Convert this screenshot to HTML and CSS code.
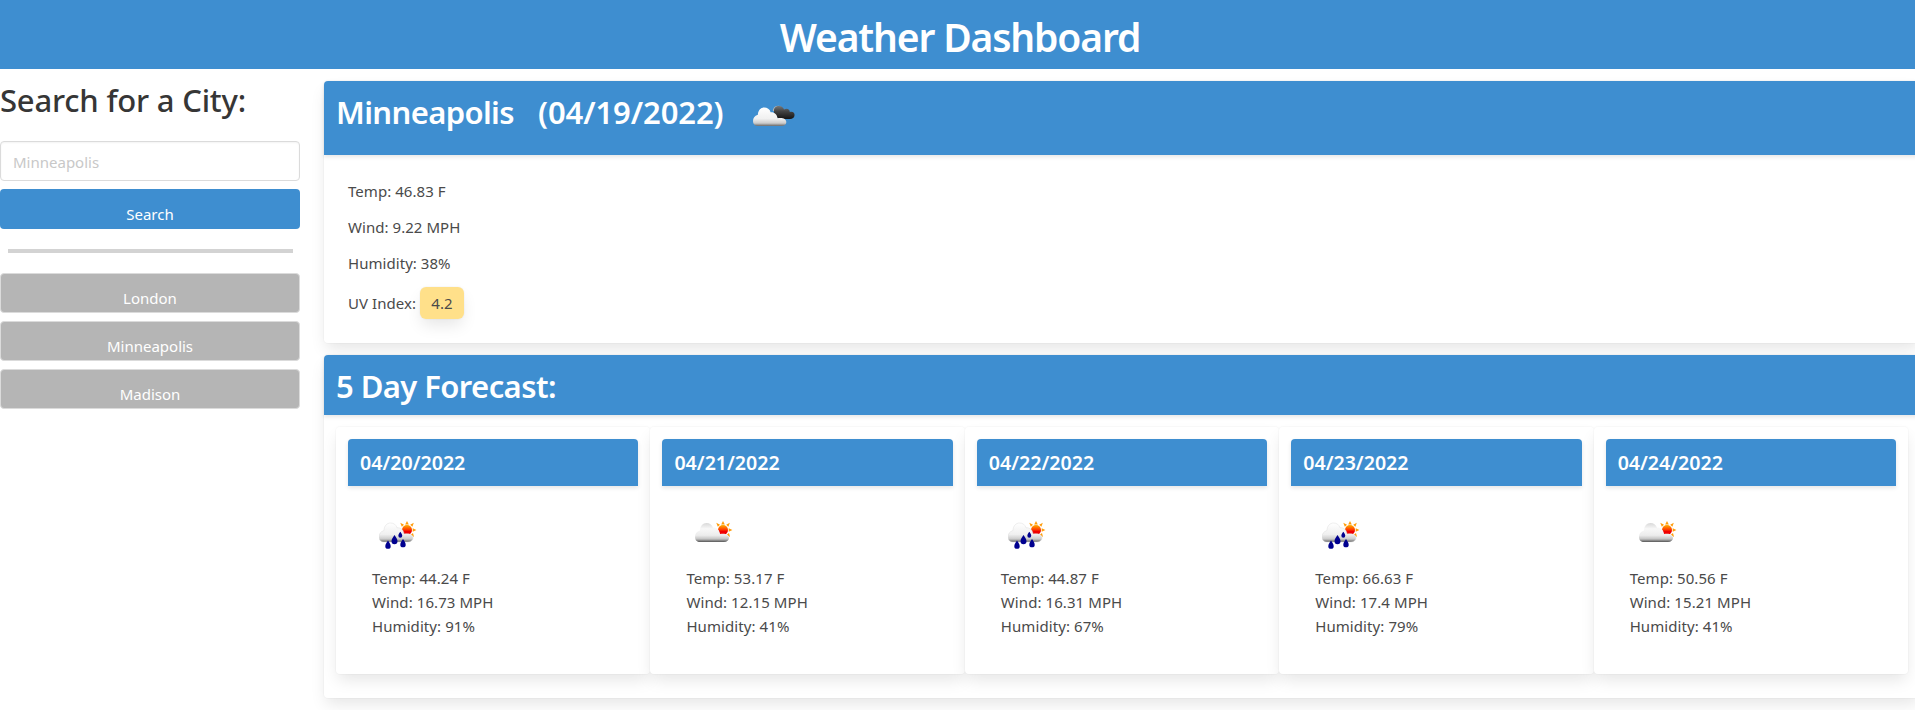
FILE: index.html
```
<!DOCTYPE html>
<html lang="en">
<head>
<meta charset="utf-8">
<title>Weather Dashboard</title>
<link rel="stylesheet" href="styles.css">
</head>
<body>
<svg class="defs" width="0" height="0" aria-hidden="true">
  <defs>
    <linearGradient id="cloud" x1="0" y1="0" x2="0" y2="1">
      <stop offset="0" stop-color="#d8d8d8"/><stop offset=".3" stop-color="#f8f8f8"/><stop offset=".65" stop-color="#ececec"/><stop offset=".84" stop-color="#c4c4c4"/><stop offset="1" stop-color="#555"/>
    </linearGradient>
    <linearGradient id="white" x1="0" y1="0" x2="0" y2="1">
      <stop offset="0" stop-color="#fff"/><stop offset=".6" stop-color="#f0f0f0"/><stop offset=".84" stop-color="#ccc"/><stop offset="1" stop-color="#666"/>
    </linearGradient>
    <linearGradient id="dark" x1="0" y1="0" x2="0" y2="1">
      <stop offset="0" stop-color="#777"/><stop offset=".4" stop-color="#444"/><stop offset="1" stop-color="#151515"/>
    </linearGradient>
    <linearGradient id="sun" x1="0" y1="0" x2="0" y2="1">
      <stop offset="0" stop-color="#ffb000"/><stop offset=".45" stop-color="#ff4000"/><stop offset=".65" stop-color="#f00000"/>
    </linearGradient>
    <path id="shape" d="M5 20C2 20 0 18 0 15C0 12 1.500 9.500 5 8.500C5 4 8 1 11.500 1C14.500 1 17 2.500 18 5.800C22 5.500 24.500 8 25 12C30 11 34 12.500 34 16C34 18 32 20 29 20Z"/>
    <g id="sunrays">
      <path fill="#ff9d0a" d="M28-1L29.800 2.500H26.200ZM21.300 .800L25 2.800 22.800 4.800ZM34.800 .800L33.400 4.800 31.200 2.800ZM37.400 8L33.700 9.800V6.200ZM35 15L31.800 12.800 34 11Z"/>
      <circle cx="28" cy="8" r="5" fill="url(#sun)"/>
    </g>
    <path id="drop" d="M0-5C1.600-2.500 3-1 3 1.300A3 3 0 0 1-3 1.300C-3-1-1.600-2.500 0-5Z"/>
    <symbol id="partly" viewBox="0 -2 38 32">
      <use href="#sunrays"/><use href="#shape" fill="url(#cloud)"/>
    </symbol>
    <symbol id="rain" viewBox="0 -2 38 32">
      <use href="#sunrays"/><use href="#shape" fill="url(#white)" stroke="#ddd" stroke-width=".5"/>
      <g fill="#00008f"><use href="#drop" x="15.500" y="18"/><use href="#drop" transform="translate(9 23) scale(.9)"/><use href="#drop" transform="translate(24 21.500) scale(.9)"/><use href="#drop" transform="translate(21.300 13) scale(.65)"/></g>
    </symbol>
    <symbol id="broken" viewBox="0 0 42 24">
      <path d="M20.500 7A4.500 4.500 0 0 1 28 3.500" fill="none" stroke="#b5b5b5" stroke-width="1.200"/>
      <path fill="url(#dark)" d="M21 11V7C21 3.500 23 2 26 2C29 2 30.500 4 31 5.500C34 3.500 37 5.500 36.800 8C39.500 7 42 8.700 41.500 11.500C41.300 13.700 39.500 15 37 15H26Z"/>
      <g transform="translate(0 2.500) scale(.98)"><use href="#shape" fill="url(#white)"/></g>
    </symbol>
  </defs>
</svg>

<header class="banner"><h1>Weather Dashboard</h1></header>
<div class="layout">
  <aside class="sidebar">
    <h2 class="title dark">Search for a City:</h2>
    <input class="field" type="text" placeholder="Minneapolis">
    <button class="button primary">Search</button>
    <hr class="divider">
    <button class="button">London</button>
    <button class="button">Minneapolis</button>
    <button class="button">Madison</button>
  </aside>
  <main class="content">
    <section class="card">
      <div class="card-head current">
        <h2 class="title city">Minneapolis</h2>
        <h2 class="title date">(04/19/2022)</h2>
        <svg class="icon-now"><use href="#broken"/></svg>
      </div>
      <div class="stats">
        <p>Temp: 46.83 F</p>
        <p>Wind: 9.22 MPH</p>
        <p>Humidity: 38%</p>
        <p class="uv-row">UV Index: <span class="uv">4.2</span></p>
      </div>
    </section>
    <section class="card">
      <div class="card-head"><h2 class="title five">5 Day Forecast:</h2></div>
      <div class="days">
        <article class="card day">
          <h3>04/20/2022</h3>
          <div class="day-body"><svg class="icon"><use href="#rain"/></svg><p>Temp: 44.24 F</p><p>Wind: 16.73 MPH</p><p>Humidity: 91%</p></div>
        </article>
        <article class="card day">
          <h3>04/21/2022</h3>
          <div class="day-body"><svg class="icon dry"><use href="#partly"/></svg><p>Temp: 53.17 F</p><p>Wind: 12.15 MPH</p><p>Humidity: 41%</p></div>
        </article>
        <article class="card day">
          <h3>04/22/2022</h3>
          <div class="day-body"><svg class="icon"><use href="#rain"/></svg><p>Temp: 44.87 F</p><p>Wind: 16.31 MPH</p><p>Humidity: 67%</p></div>
        </article>
        <article class="card day">
          <h3>04/23/2022</h3>
          <div class="day-body"><svg class="icon"><use href="#rain"/></svg><p>Temp: 66.63 F</p><p>Wind: 17.4 MPH</p><p>Humidity: 79%</p></div>
        </article>
        <article class="card day">
          <h3>04/24/2022</h3>
          <div class="day-body"><svg class="icon dry"><use href="#partly"/></svg><p>Temp: 50.56 F</p><p>Wind: 15.21 MPH</p><p>Humidity: 41%</p></div>
        </article>
      </div>
    </section>
  </main>
</div>
</body>
</html>
```
FILE: styles.css
```
* { box-sizing: border-box; margin: 0; padding: 0; }
html { background: #fff; }
body {
  height: 710px;
  overflow: hidden;
  color: #4a4a4a;
  font: 15px/24px "Noto Sans", "Open Sans", sans-serif;
}
.defs { position: absolute; }
.banner { height: 69px; padding: 13px 0 0 5px; background: #3e8ed0; color: #fff; text-align: center; }
.banner h1 { font-size: 39px; line-height: 47px; font-weight: 600; letter-spacing: -1.150px; }
.layout { display: flex; gap: 24px; padding-top: 12px; }
.sidebar { width: 300px; flex: none; }
.title { font-size: 31px; line-height: 36px; font-weight: 600; white-space: nowrap; color: #fff; }
.dark { color: #363636; font-weight: 500; margin: 1px 0 23px; letter-spacing: -.200px; }
.field {
  display: block; width: 300px; height: 40px; padding: 2px 12px 0; margin-bottom: 8px;
  border: 1px solid #dbdbdb; border-radius: 4px; box-shadow: inset 0 1px 2px rgba(10,10,10,.05);
  font: inherit;
}
.field::placeholder { color: #c8c8c8; opacity: 1; }
.button {
  display: block; width: 300px; height: 40px; margin-bottom: 8px; padding-top: 9px;
  border: 1px solid #dbdbdb; border-radius: 4px; background: #b5b5b5; color: #fff;
  font: inherit; text-align: center;
}
.primary { background: #3e8ed0; border: 0; }
.divider { height: 4px; width: 285px; margin: 20px 0 20px 8px; border: 0; background: #d3d3d3; }
.content { width: 1596px; flex: none; }
.card {
  background: #fff; border-radius: 4px;
  box-shadow: 0 8px 16px -2px rgba(10,10,10,.1), 0 0 0 1px rgba(10,10,10,.02);
}
.content > .card { margin-bottom: 12px; }
.card-head {
  height: 60px; padding: 13px 12px 0; background: #3e8ed0;
  border-radius: 4px 4px 0 0; box-shadow: 0 2px 4px rgba(10,10,10,.1);
}
.current { height: 74px; display: flex; }
.city { width: 202px; letter-spacing: -.620px; }
.date { width: 215px; letter-spacing: -.100px; }
.five { letter-spacing: -.580px; }
.icon-now { width: 42px; height: 24px; margin-top: 10px; }
.stats { height: 188px; padding: 24px; display: flex; flex-direction: column; gap: 12px; letter-spacing: .050px; }
.uv-row { height: 32px; line-height: 32px; }
.uv {
  display: inline-block; height: 32px; width: 44px; text-align: center; border-radius: 6px;
  background: #ffe08a; box-shadow: 0 8px 16px -2px rgba(10,10,10,.1), 0 0 0 1px rgba(10,10,10,.02);
}
.days { display: flex; padding: 12px 12px 24px; }
.day { flex: 1; height: 247px; padding: 12px; }
.day h3 {
  height: 47px; padding: 12px; color: #fff; background: #3e8ed0; font-size: 19.600px; line-height: 24px;
  font-weight: 600; border-radius: 4px 4px 0 0; box-shadow: 0 2px 4px rgba(10,10,10,.1);
}
.day-body { padding: 34px 24px 0; letter-spacing: .080px; }
.icon { display: block; width: 38px; height: 32px; margin: 0 0 14px 7px; }
.dry { margin-left: 9px; }
```
